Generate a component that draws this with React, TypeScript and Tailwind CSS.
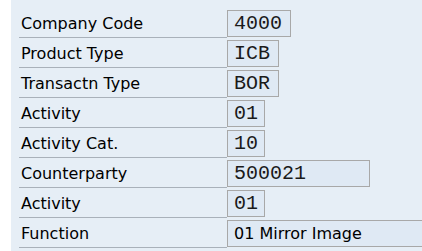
import React from "react";

type Row = { label: string; value: string; width: string; mono: boolean };

const rows: Row[] = [
  { label: "Company Code", value: "4000", width: "w-[64px]", mono: true },
  { label: "Product Type", value: "ICB", width: "w-[52px]", mono: true },
  { label: "Transactn Type", value: "BOR", width: "w-[52px]", mono: true },
  { label: "Activity", value: "01", width: "w-[38px]", mono: true },
  { label: "Activity Cat.", value: "10", width: "w-[38px]", mono: true },
  { label: "Counterparty", value: "500021", width: "w-[143px]", mono: true },
  { label: "Activity", value: "01", width: "w-[38px]", mono: true },
  { label: "Function", value: "01 Mirror Image", width: "w-[220px]", mono: false },
];

export default function App() {
  return (
    <div className="flex h-[251px] w-[422px] overflow-hidden bg-white">
      <div className="w-[11px] shrink-0 bg-white" />
      <div className="flex flex-1 flex-col bg-[#e6eef6] pl-[8px] pt-[9px]">
        {rows.map((r, i) => (
          <div key={i} className="flex h-[30px] shrink-0 items-start">
            <div className="flex h-[29px] w-[208px] shrink-0 items-center border-b border-[#a9b1ba] pl-[2px] pt-[2px] text-[16px] text-black [font-family:'DejaVu_Sans',sans-serif]">
              {r.label}
            </div>
            <div
              className={`mt-[1px] flex h-[27px] shrink-0 items-center border border-[#a8a8a8] bg-[#dfe9f4] px-[6px] ${r.width} ${
                r.mono
                  ? "text-[20px] text-[#1a1a1a] [font-family:'Liberation_Mono',monospace]"
                  : "text-[16px] text-black [font-family:'DejaVu_Sans',sans-serif]"
              }`}
            >
              {r.value}
            </div>
          </div>
        ))}
      </div>
    </div>
  );
}
